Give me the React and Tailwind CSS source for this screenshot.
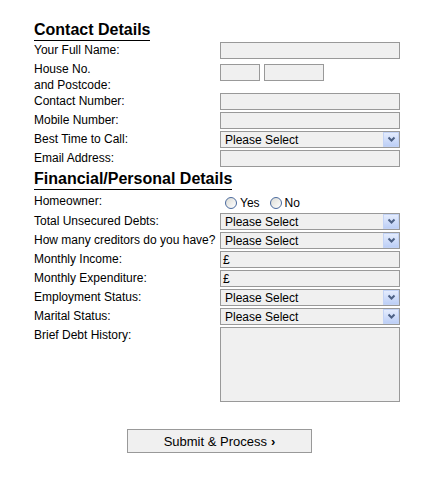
import React from "react";

const box = "border border-[#999] bg-[#f0f0f0] h-[17px]";

function Select() {
  return (
    <div className={`${box} relative flex w-[180px] items-center pl-[4px] text-[12px] leading-none`}>
      <span>Please Select</span>
      <span className="absolute right-0 top-0 flex h-[15px] w-[16px] items-center justify-center border border-[#c3d3f5] bg-gradient-to-b from-[#e4ecfd] to-[#bdcff6]">
        <svg width="9" height="7" viewBox="0 0 9 7">
          <path d="M1.5 1.5 L4.5 4.5 L7.5 1.5" fill="none" stroke="#4d6185" strokeWidth="2" />
        </svg>
      </span>
    </div>
  );
}

function Input({ w = "w-[180px]", children }) {
  return (
    <div className={`${box} ${w} flex items-center pl-[2px] text-[12px] leading-none`}>
      {children}
    </div>
  );
}

function Row({ label, children, h = "h-[19px]" }) {
  return (
    <div className={`flex items-start ${h}`}>
      <div className="w-[186px] leading-[16px]">{label}</div>
      {children}
    </div>
  );
}

function Radio({ label }) {
  return (
    <span className="flex items-center">
      <span className="h-[12px] w-[12px] rounded-full border border-[#4a6a9e] bg-gradient-to-br from-[#dcdcd6] to-white" />
      <span className="ml-[3px] leading-[16px]">{label}</span>
    </span>
  );
}

function Heading({ children }) {
  return (
    <div>
      <h2 className="inline-block border-b border-black text-[16px] font-bold leading-[20px]">
        {children}
      </h2>
    </div>
  );
}

export default function App() {
  return (
    <div className="min-h-screen bg-white pl-[34px] pt-[20px] font-['Liberation_Sans',Arial,sans-serif] text-[12px] text-black">
      <Heading>Contact Details</Heading>

      <div className="mt-[1px]">
        <Row label="Your Full Name:">
          <Input />
        </Row>
        <Row label={<>House No.<br />and Postcode:</>} h="h-[32px]">
          <div className="mt-[3px] flex gap-[4px]">
            <Input w="w-[40px]" />
            <Input w="w-[60px]" />
          </div>
        </Row>
        <Row label="Contact Number:">
          <Input />
        </Row>
        <Row label="Mobile Number:">
          <Input />
        </Row>
        <Row label="Best Time to Call:">
          <Select />
        </Row>
        <Row label="Email Address:">
          <Input />
        </Row>
      </div>

      <Heading>Financial/Personal Details</Heading>

      <div className="flex h-[23px] items-start pt-[3px]">
        <div className="w-[186px] leading-[16px]">Homeowner:</div>
        <div className="ml-[5px] mt-[2px] flex gap-[10px]">
          <Radio label="Yes" />
          <Radio label="No" />
        </div>
      </div>

      <Row label="Total Unsecured Debts:">
        <Select />
      </Row>
      <Row label="How many creditors do you have?">
        <Select />
      </Row>
      <Row label="Monthly Income:">
        <Input>£</Input>
      </Row>
      <Row label="Monthly Expenditure:">
        <Input>£</Input>
      </Row>
      <Row label="Employment Status:">
        <Select />
      </Row>
      <Row label="Marital Status:">
        <Select />
      </Row>
      <Row label="Brief Debt History:" h="h-[75px]">
        <div className="h-[75px] w-[180px] border border-[#999] bg-[#f0f0f0]" />
      </Row>

      <button className="ml-[93px] mt-[27px] flex h-[24px] w-[185px] items-center justify-center border border-[#999] bg-[#f0f0f0] text-[13px] leading-none">
        Submit &amp; Process
        <span className="ml-[4px] font-bold">›</span>
      </button>
    </div>
  );
}
